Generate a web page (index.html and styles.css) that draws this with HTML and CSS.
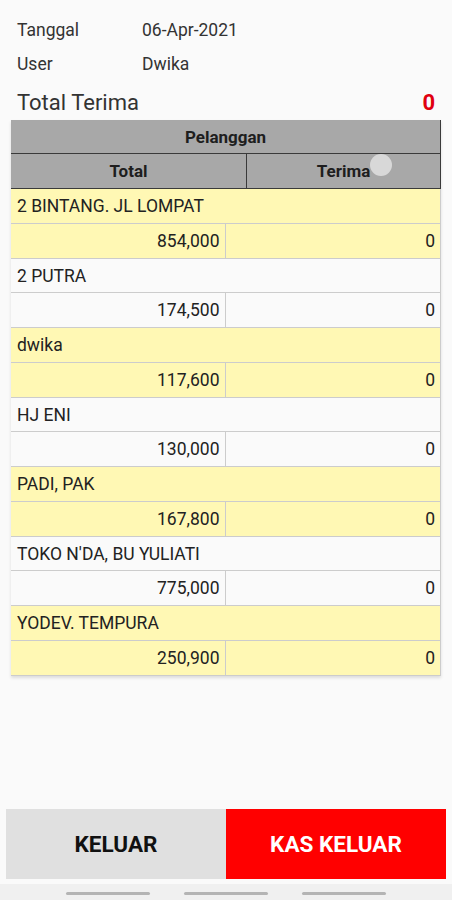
FILE: index.html
```html
<!DOCTYPE html>
<html lang="id">
<head>
    <meta charset="UTF-8">
    <meta name="viewport" content="width=device-width, initial-scale=1.0">
    <title>Kas Keluar</title>
    <link rel="stylesheet" href="styles.css">
</head>
<body>
    <div id="screen">
        <div id="info">
            <div class="info-row"><span class="info-label">Tanggal</span><span>06-Apr-2021</span></div>
            <div class="info-row"><span class="info-label">User</span><span>Dwika</span></div>
        </div>

        <div id="total-row">
            <span>Total Terima</span>
            <span class="total-value">0</span>
        </div>

        <div id="table">
            <div class="head head-top">Pelanggan</div>
            <div class="head head-cols">
                <div>Total</div>
                <div>Terima</div>
            </div>
            <div class="touch"></div>

            <div class="row name yellow">2 BINTANG. JL LOMPAT</div>
            <div class="row values yellow"><div>854,000</div><div>0</div></div>

            <div class="row name">2 PUTRA</div>
            <div class="row values"><div>174,500</div><div>0</div></div>

            <div class="row name yellow">dwika</div>
            <div class="row values yellow"><div>117,600</div><div>0</div></div>

            <div class="row name">HJ ENI</div>
            <div class="row values"><div>130,000</div><div>0</div></div>

            <div class="row name yellow">PADI, PAK</div>
            <div class="row values yellow"><div>167,800</div><div>0</div></div>

            <div class="row name">TOKO N'DA, BU YULIATI</div>
            <div class="row values"><div>775,000</div><div>0</div></div>

            <div class="row name yellow">YODEV. TEMPURA</div>
            <div class="row values yellow"><div>250,900</div><div>0</div></div>
        </div>

        <div id="spacer"></div>

        <div id="buttons">
            <button class="btn btn-keluar">KELUAR</button>
            <button class="btn btn-kas">KAS KELUAR</button>
        </div>

        <div id="navbar">
            <span class="nav-bar"></span>
            <span class="nav-bar"></span>
            <span class="nav-bar"></span>
        </div>
    </div>
</body>
</html>
```

FILE: styles.css
```css
body {
    margin: 0;
    padding: 0;
    background: #fafafa;
    font-family: 'Roboto', 'Liberation Sans', sans-serif;
    color: #222;
}
#screen {
    height: 900px;
    display: flex;
    flex-direction: column;
}
#info {
    padding: 13px 17px 0 17px;
    font-size: 17.5px;
    color: #333;
}
.info-row {
    display: flex;
    height: 34px;
    line-height: 34px;
}
.info-label {
    width: 125px;
}
#total-row {
    display: flex;
    justify-content: space-between;
    align-items: center;
    height: 30px;
    margin-top: 6px;
    padding: 0 17px;
    font-size: 22px;
    color: #333;
}
.total-value {
    color: #e0000f;
    font-weight: bold;
}
#table {
    position: relative;
    margin: 3px 11px 0 11px;
    box-shadow: 0 2px 3px rgba(0, 0, 0, 0.12);
}
.head {
    background: #a8a8a8;
    font-weight: bold;
    font-size: 17px;
    color: #1e1e1e;
    border-right: 1.5px solid #3a3a3a;
    box-sizing: border-box;
}
.head-top {
    height: 34px;
    line-height: 34px;
    text-align: center;
    border-bottom: 1.5px solid #3a3a3a;
}
.head-cols {
    display: grid;
    grid-template-columns: 236px 1fr;
    height: 35px;
    line-height: 34px;
    border-bottom: 1.5px solid #3a3a3a;
}
.head-cols div {
    text-align: center;
}
.head-cols div:first-child {
    border-right: 1.5px solid #3a3a3a;
}
.touch {
    position: absolute;
    left: 359px;
    top: 34px;
    width: 22px;
    height: 22px;
    border-radius: 50%;
    background: rgba(225, 225, 225, 0.85);
}
.row {
    height: 34.75px;
    box-sizing: border-box;
    border-bottom: 1px solid #cccccc;
    border-right: 1px solid #cccccc;
    font-size: 17.5px;
    line-height: 34px;
    background: #fafafa;
}
.row.yellow {
    background: #fff8b4;
}
.name {
    padding-left: 6px;
}
.values {
    display: grid;
    grid-template-columns: 1fr 1fr;
}
.values div {
    text-align: right;
    padding-right: 5px;
}
.values div:first-child {
    border-right: 1px solid #cccccc;
}
#spacer {
    flex: 1;
}
#buttons {
    display: grid;
    grid-template-columns: 1fr 1fr;
    padding: 0 6px;
}
.btn {
    height: 70px;
    border: none;
    margin: 0;
    font-family: 'Roboto', 'Liberation Sans', sans-serif;
    font-weight: bold;
    font-size: 22.5px;
}
.btn-keluar {
    background: #e0e0e0;
    color: #111;
}
.btn-kas {
    background: #ff0000;
    color: #fff;
}
#navbar {
    margin-top: 5px;
    height: 16px;
    background: #f0f0f0;
    display: flex;
    justify-content: center;
    gap: 34px;
    padding-top: 8px;
    box-sizing: border-box;
}
.nav-bar {
    width: 84px;
    height: 3px;
    border-radius: 2px;
    background: #b4b4b4;
}
```
